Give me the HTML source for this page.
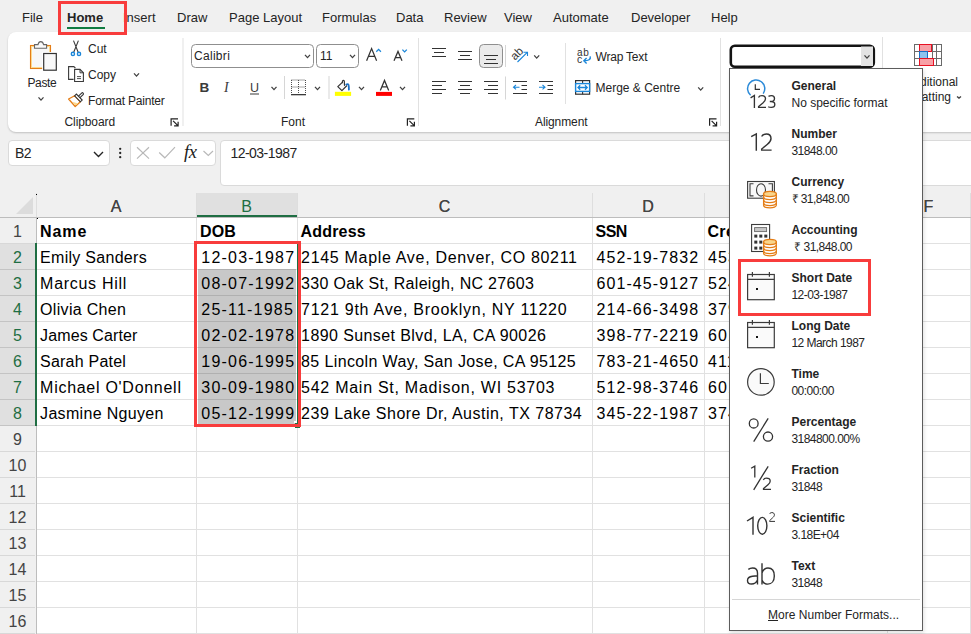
<!DOCTYPE html><html><head><meta charset="utf-8"><style>
*{box-sizing:border-box;margin:0;padding:0}
html,body{width:971px;height:634px;overflow:hidden;background:#f0f0f0;font-family:"Liberation Sans",sans-serif;color:#242424;position:relative}
.a{position:absolute;white-space:nowrap}
.tab{position:absolute;top:10px;font-size:13px;line-height:15px;color:#242424;white-space:nowrap}
.rib{position:absolute;left:8px;top:32px;width:980px;height:100px;background:#fff;border-radius:8px;box-shadow:0 1px 2px rgba(0,0,0,.2)}
.t12{position:absolute;font-size:12px;line-height:14px;color:#242424;white-space:nowrap}
.sep{position:absolute;width:1px;background:#e0e0e0}
.cell{position:absolute;font-size:16px;line-height:26px;height:26px;color:#000;white-space:nowrap}
.rh{position:absolute;left:0;width:35px;height:26px;font-size:16px;line-height:26px;text-align:center;color:#444}
.ch{position:absolute;top:194.5px;height:24px;font-size:16px;line-height:24px;text-align:center;color:#444}
.dd .t{position:absolute;left:62px;font-size:12px;font-weight:bold;line-height:14px;color:#242424;white-space:nowrap}
.dd .s{position:absolute;left:62px;font-size:12px;line-height:14px;color:#242424;white-space:nowrap}
svg{position:absolute;overflow:visible}
</style></head><body>
<div class="a" style="left:37px;top:218px;width:934px;height:416px;background:#fff"></div>
<div class="a" style="left:198px;top:270px;width:98px;height:155px;background:#c8c8c8"></div>
<div class="a" style="left:37px;top:243px;width:934px;height:1px;background:#e1e1e1"></div>
<div class="a" style="left:37px;top:269px;width:934px;height:1px;background:#e1e1e1"></div>
<div class="a" style="left:37px;top:295px;width:934px;height:1px;background:#e1e1e1"></div>
<div class="a" style="left:37px;top:321px;width:934px;height:1px;background:#e1e1e1"></div>
<div class="a" style="left:37px;top:347px;width:934px;height:1px;background:#e1e1e1"></div>
<div class="a" style="left:37px;top:373px;width:934px;height:1px;background:#e1e1e1"></div>
<div class="a" style="left:37px;top:399px;width:934px;height:1px;background:#e1e1e1"></div>
<div class="a" style="left:37px;top:425px;width:934px;height:1px;background:#e1e1e1"></div>
<div class="a" style="left:37px;top:451px;width:934px;height:1px;background:#e1e1e1"></div>
<div class="a" style="left:37px;top:477px;width:934px;height:1px;background:#e1e1e1"></div>
<div class="a" style="left:37px;top:503px;width:934px;height:1px;background:#e1e1e1"></div>
<div class="a" style="left:37px;top:529px;width:934px;height:1px;background:#e1e1e1"></div>
<div class="a" style="left:37px;top:555px;width:934px;height:1px;background:#e1e1e1"></div>
<div class="a" style="left:37px;top:581px;width:934px;height:1px;background:#e1e1e1"></div>
<div class="a" style="left:37px;top:607px;width:934px;height:1px;background:#e1e1e1"></div>
<div class="a" style="left:37px;top:633px;width:934px;height:1px;background:#e1e1e1"></div>
<div class="a" style="left:198px;top:269px;width:98px;height:1px;background:#b0b0b0"></div>
<div class="a" style="left:198px;top:295px;width:98px;height:1px;background:#b0b0b0"></div>
<div class="a" style="left:198px;top:321px;width:98px;height:1px;background:#b0b0b0"></div>
<div class="a" style="left:198px;top:347px;width:98px;height:1px;background:#b0b0b0"></div>
<div class="a" style="left:198px;top:373px;width:98px;height:1px;background:#b0b0b0"></div>
<div class="a" style="left:198px;top:399px;width:98px;height:1px;background:#b0b0b0"></div>
<div class="a" style="left:196px;top:218px;width:1px;height:416px;background:#e1e1e1"></div>
<div class="a" style="left:297px;top:218px;width:1px;height:416px;background:#e1e1e1"></div>
<div class="a" style="left:592px;top:218px;width:1px;height:416px;background:#e1e1e1"></div>
<div class="a" style="left:704px;top:218px;width:1px;height:416px;background:#e1e1e1"></div>
<div class="a" style="left:887px;top:218px;width:1px;height:416px;background:#e1e1e1"></div>
<div class="a" style="left:970px;top:218px;width:1px;height:416px;background:#e1e1e1"></div>
<div class="a" style="left:0;top:217px;width:971px;height:1px;background:#bdbdbd"></div>
<div class="a" style="left:196px;top:193px;width:1px;height:24px;background:#dedede"></div>
<div class="a" style="left:297px;top:193px;width:1px;height:24px;background:#dedede"></div>
<div class="a" style="left:592px;top:193px;width:1px;height:24px;background:#dedede"></div>
<div class="a" style="left:704px;top:193px;width:1px;height:24px;background:#dedede"></div>
<div class="a" style="left:887px;top:193px;width:1px;height:24px;background:#dedede"></div>
<div class="a" style="left:970px;top:193px;width:1px;height:24px;background:#dedede"></div>
<div class="a" style="left:36px;top:193px;width:1px;height:441px;background:#bdbdbd"></div>
<div class="a" style="left:196px;top:193px;width:101px;height:24px;background:#e0e0e0"></div>
<div class="a" style="left:196px;top:215px;width:101px;height:2px;background:#1f6e43"></div>
<div class="a" style="left:0;top:244px;width:35px;height:182px;background:#e0e0e0"></div>
<div class="a" style="left:35px;top:243px;width:2px;height:183px;background:#1f6e43"></div>
<div class="a" style="left:0;top:243px;width:35px;height:1px;background:#d8d8d8"></div>
<div class="a" style="left:0;top:269px;width:35px;height:1px;background:#c4c4c4"></div>
<div class="a" style="left:0;top:295px;width:35px;height:1px;background:#c4c4c4"></div>
<div class="a" style="left:0;top:321px;width:35px;height:1px;background:#c4c4c4"></div>
<div class="a" style="left:0;top:347px;width:35px;height:1px;background:#c4c4c4"></div>
<div class="a" style="left:0;top:373px;width:35px;height:1px;background:#c4c4c4"></div>
<div class="a" style="left:0;top:399px;width:35px;height:1px;background:#c4c4c4"></div>
<div class="a" style="left:0;top:425px;width:35px;height:1px;background:#c4c4c4"></div>
<div class="a" style="left:0;top:451px;width:35px;height:1px;background:#d8d8d8"></div>
<div class="a" style="left:0;top:477px;width:35px;height:1px;background:#d8d8d8"></div>
<div class="a" style="left:0;top:503px;width:35px;height:1px;background:#d8d8d8"></div>
<div class="a" style="left:0;top:529px;width:35px;height:1px;background:#d8d8d8"></div>
<div class="a" style="left:0;top:555px;width:35px;height:1px;background:#d8d8d8"></div>
<div class="a" style="left:0;top:581px;width:35px;height:1px;background:#d8d8d8"></div>
<div class="a" style="left:0;top:607px;width:35px;height:1px;background:#d8d8d8"></div>
<div class="a" style="left:0;top:633px;width:35px;height:1px;background:#d8d8d8"></div>
<svg style="left:0;top:0" width="971" height="634"><polygon points="33,197 33,214 16,214" fill="#dcdcdc"/></svg>
<div class="ch" style="left:36px;width:160px;color:#444">A</div>
<div class="ch" style="left:196px;width:101px;color:#1f6e43">B</div>
<div class="ch" style="left:297px;width:295px;color:#444">C</div>
<div class="ch" style="left:592px;width:112px;color:#444">D</div>
<div class="ch" style="left:704px;width:183px;color:#444">E</div>
<div class="ch" style="left:887px;width:83px;color:#444">F</div>
<div class="rh" style="top:219px;color:#444">1</div>
<div class="rh" style="top:245px;color:#1f6e43">2</div>
<div class="rh" style="top:271px;color:#1f6e43">3</div>
<div class="rh" style="top:297px;color:#1f6e43">4</div>
<div class="rh" style="top:323px;color:#1f6e43">5</div>
<div class="rh" style="top:349px;color:#1f6e43">6</div>
<div class="rh" style="top:375px;color:#1f6e43">7</div>
<div class="rh" style="top:401px;color:#1f6e43">8</div>
<div class="rh" style="top:427px;color:#444">9</div>
<div class="rh" style="top:453px;color:#444">10</div>
<div class="rh" style="top:479px;color:#444">11</div>
<div class="rh" style="top:505px;color:#444">12</div>
<div class="rh" style="top:531px;color:#444">13</div>
<div class="rh" style="top:557px;color:#444">14</div>
<div class="rh" style="top:583px;color:#444">15</div>
<div class="rh" style="top:609px;color:#444">16</div>
<div class="cell" style="left:40px;top:219px;font-weight:bold;letter-spacing:0.9px">Name</div>
<div class="cell" style="left:200px;top:219px;font-weight:bold;letter-spacing:0.1px">DOB</div>
<div class="cell" style="left:300.6px;top:219px;font-weight:bold;letter-spacing:0.17px">Address</div>
<div class="cell" style="left:595.5px;top:219px;font-weight:bold;letter-spacing:-0.5px">SSN</div>
<div class="cell" style="left:707.5px;top:219px;font-weight:bold;letter-spacing:0.3px">Credit Card</div>
<div class="cell" style="left:40.1px;top:245px;letter-spacing:0.283px">Emily Sanders</div>
<div class="cell" style="left:201.3px;top:245px;letter-spacing:1.21px">12-03-1987</div>
<div class="cell" style="left:301.1px;top:245px;letter-spacing:0.684px">2145 Maple Ave, Denver, CO 80211</div>
<div class="cell" style="left:596.5px;top:245px;letter-spacing:1.08px">452-19-7832</div>
<div class="cell" style="left:708px;top:245px;letter-spacing:1.08px">4532 7012</div>
<div class="cell" style="left:40.1px;top:271px;letter-spacing:0.71px">Marcus Hill</div>
<div class="cell" style="left:201.3px;top:271px;letter-spacing:1.21px">08-07-1992</div>
<div class="cell" style="left:301.1px;top:271px;letter-spacing:0.307px">330 Oak St, Raleigh, NC 27603</div>
<div class="cell" style="left:596.5px;top:271px;letter-spacing:1.08px">601-45-9127</div>
<div class="cell" style="left:708px;top:271px;letter-spacing:1.08px">5241 8830</div>
<div class="cell" style="left:40.1px;top:297px;letter-spacing:0.31px">Olivia Chen</div>
<div class="cell" style="left:201.3px;top:297px;letter-spacing:1.21px">25-11-1985</div>
<div class="cell" style="left:301.1px;top:297px;letter-spacing:0.732px">7121 9th Ave, Brooklyn, NY 11220</div>
<div class="cell" style="left:596.5px;top:297px;letter-spacing:1.08px">214-66-3498</div>
<div class="cell" style="left:708px;top:297px;letter-spacing:1.08px">3791 2254</div>
<div class="cell" style="left:40.1px;top:323px;letter-spacing:0.109px">James Carter</div>
<div class="cell" style="left:201.3px;top:323px;letter-spacing:1.21px">02-02-1978</div>
<div class="cell" style="left:301.1px;top:323px;letter-spacing:0.403px">1890 Sunset Blvd, LA, CA 90026</div>
<div class="cell" style="left:596.5px;top:323px;letter-spacing:1.08px">398-77-2219</div>
<div class="cell" style="left:708px;top:323px;letter-spacing:1.08px">6011 5542</div>
<div class="cell" style="left:40.1px;top:349px;letter-spacing:0.21px">Sarah Patel</div>
<div class="cell" style="left:201.3px;top:349px;letter-spacing:1.21px">19-06-1995</div>
<div class="cell" style="left:301.1px;top:349px;letter-spacing:0.37px">85 Lincoln Way, San Jose, CA 95125</div>
<div class="cell" style="left:596.5px;top:349px;letter-spacing:1.08px">783-21-4650</div>
<div class="cell" style="left:708px;top:349px;letter-spacing:1.08px">4111 0027</div>
<div class="cell" style="left:40.1px;top:375px;letter-spacing:0.719px">Michael O&#39;Donnell</div>
<div class="cell" style="left:201.3px;top:375px;letter-spacing:1.21px">30-09-1980</div>
<div class="cell" style="left:301.1px;top:375px;letter-spacing:0.731px">542 Main St, Madison, WI 53703</div>
<div class="cell" style="left:596.5px;top:375px;letter-spacing:1.08px">512-98-3746</div>
<div class="cell" style="left:708px;top:375px;letter-spacing:1.08px">6011 9831</div>
<div class="cell" style="left:40.1px;top:401px;letter-spacing:0.315px">Jasmine Nguyen</div>
<div class="cell" style="left:201.3px;top:401px;letter-spacing:1.21px">05-12-1999</div>
<div class="cell" style="left:301.1px;top:401px;letter-spacing:0.494px">239 Lake Shore Dr, Austin, TX 78734</div>
<div class="cell" style="left:596.5px;top:401px;letter-spacing:1.08px">345-22-1987</div>
<div class="cell" style="left:708px;top:401px;letter-spacing:1.08px">3742 5518</div>
<div class="a" style="left:297px;top:244px;width:1px;height:181px;background:#1f6e43"></div>
<div class="a" style="left:194px;top:241px;width:107px;height:186px;border:3px solid #f83c3c"></div>
<div class="a" style="left:295px;top:422.5px;width:3px;height:1px;background:#1f6e43"></div>
<div class="a" style="left:295px;top:427px;width:5px;height:1px;background:#1f6e43"></div>
<div class="a" style="left:294px;top:421px;width:3px;height:1.5px;background:#fff"></div>
<div class="a" style="left:0;top:0;width:971px;height:193px;background:#f0f0f0"></div>
<div class="a" style="left:0;top:193px;width:36px;height:24px;background:#f0f0f0"></div>
<svg style="left:0;top:0" width="971" height="634"><polygon points="33,197 33,214 16,214" fill="#dcdcdc"/></svg>
<div class="a" style="left:36px;top:193px;width:1px;height:24px;background:#dedede"></div>
<div class="a" style="left:196px;top:193px;width:101px;height:24px;background:#e0e0e0"></div>
<div class="a" style="left:196px;top:215px;width:101px;height:2px;background:#1f6e43"></div>
<div class="a" style="left:196px;top:193px;width:1px;height:24px;background:#dedede"></div>
<div class="a" style="left:297px;top:193px;width:1px;height:24px;background:#dedede"></div>
<div class="a" style="left:592px;top:193px;width:1px;height:24px;background:#dedede"></div>
<div class="a" style="left:704px;top:193px;width:1px;height:24px;background:#dedede"></div>
<div class="a" style="left:887px;top:193px;width:1px;height:24px;background:#dedede"></div>
<div class="a" style="left:970px;top:193px;width:1px;height:24px;background:#dedede"></div>
<div class="ch" style="left:36px;width:160px;color:#444">A</div>
<div class="ch" style="left:196px;width:101px;color:#1f6e43">B</div>
<div class="ch" style="left:297px;width:295px;color:#444">C</div>
<div class="ch" style="left:592px;width:112px;color:#444">D</div>
<div class="ch" style="left:704px;width:183px;color:#444">E</div>
<div class="ch" style="left:887px;width:83px;color:#444">F</div>
<div class="a" style="left:36px;top:194px;width:1px;height:1px;background:#000"></div>
<div class="a" style="left:37px;top:218px;width:1px;height:1px;background:#000"></div>
<div class="tab" style="left:22px">File</div>
<div class="tab" style="left:67px;font-weight:bold">Home</div>
<div class="tab" style="left:123px">Insert</div>
<div class="tab" style="left:177px">Draw</div>
<div class="tab" style="left:229px">Page Layout</div>
<div class="tab" style="left:322px">Formulas</div>
<div class="tab" style="left:396px">Data</div>
<div class="tab" style="left:444px">Review</div>
<div class="tab" style="left:504px">View</div>
<div class="tab" style="left:553px">Automate</div>
<div class="tab" style="left:631px">Developer</div>
<div class="tab" style="left:711px">Help</div>
<div class="a" style="left:67px;top:27px;width:38px;height:2px;background:#107c41"></div>
<div class="rib"></div>
<div class="a" style="left:58px;top:1px;width:69px;height:34px;border:3px solid #f83c3c;z-index:5"></div>
<div class="a" style="left:8px;top:140px;width:102px;height:26px;background:#fff;border:1px solid #dadada;border-radius:4px"></div>
<div class="a" style="left:15px;top:145px;font-size:14px;line-height:16px;color:#242424;letter-spacing:-.6px">B2</div>
<svg style="left:0;top:0" width="971" height="634" fill="none" stroke="#242424" stroke-width="1.4"><path d="M94,152 L98.5,156.5 L103,152"/></svg>
<svg style="left:0;top:0" width="971" height="634" fill="#242424"><circle cx="120.2" cy="148.8" r="1.15"/><circle cx="120.2" cy="153" r="1.15"/><circle cx="120.2" cy="157.2" r="1.15"/></svg>
<div class="a" style="left:130px;top:140px;width:86px;height:26px;background:#fff;border:1px solid #dadada;border-radius:4px"></div>
<svg style="left:0;top:0" width="971" height="634" fill="none" stroke="#b8b8b8" stroke-width="1.2"><path d="M137,147.2 L149,158.6 M149,147.2 L137,158.6"/><path d="M159.2,152.5 L164.8,157.8 L175,147.2"/><path d="M203.5,151 L208.3,155.5 L213,151"/></svg>
<div class="a" style="left:184px;top:142px;font-family:'Liberation Serif',serif;font-style:italic;font-size:18.5px;line-height:20px;color:#1a1a1a;letter-spacing:-.3px">fx</div>
<div class="a" style="left:220px;top:140px;width:760px;height:46px;background:#fff;border:1px solid #dadada;border-radius:4px"></div>
<div class="a" style="left:230.5px;top:145px;font-size:14px;line-height:16px;color:#242424;letter-spacing:-.55px">12-03-1987</div>
<svg style="left:0;top:0" width="971" height="634"><rect x="182.5" y="38" width="1" height="88" fill="#e1e1e1"/><rect x="418" y="38" width="1" height="88" fill="#e1e1e1"/><rect x="720" y="38" width="1" height="88" fill="#e1e1e1"/><rect x="882" y="37" width="1" height="88" fill="#e1e1e1"/><rect x="30.5" y="45.5" width="20" height="23" fill="#fff" stroke="#e47d16" stroke-width="1.1"/><rect x="31.6" y="46.6" width="17.8" height="20.8" fill="none" stroke="#fbd889" stroke-width="1.1"/><rect x="32.2" y="47.2" width="16.6" height="19.6" fill="#f7f7f7"/><path d="M34.5,48.2 L34.5,44.6 L38,44.6 C38.5,42.2 39.6,41.6 40.8,41.6 C42,41.6 43.1,42.2 43.6,44.6 L46.6,44.6 L46.6,48.2 Z" fill="#fafafa" stroke="#666" stroke-width="1.1"/><rect x="42.2" y="52" width="15.6" height="19.7" fill="#fff"/><rect x="43.7" y="53.5" width="12.6" height="16.7" fill="#f8f8f8" stroke="#333" stroke-width="1.2"/><path d="M38.5,97.4 L41.0,100.10000000000001 L43.5,97.4" fill="none" stroke="#424242" stroke-width="1.3"/><path d="M73.5,40.6 L78.2,52.3 M78.4,40.6 L73.7,52.3" stroke="#3a3a3a" stroke-width="1.1" fill="none"/><circle cx="72.9" cy="53.9" r="1.6" fill="#fff" stroke="#1a86d9" stroke-width="1.4"/><circle cx="79" cy="53.9" r="1.6" fill="#fff" stroke="#1a86d9" stroke-width="1.4"/><path d="M73.6,79.4 L68.6,79.4 L68.6,66.6 L73.8,66.6 L75.4,68" fill="none" stroke="#3a3a3a" stroke-width="1.1"/><path d="M74.6,69.4 L80,69.4 L83.4,72.8 L83.4,81.5 L74.6,81.5 Z" fill="#fff" stroke="#3a3a3a" stroke-width="1.1"/><path d="M80,69.4 L80,72.8 L83.4,72.8" fill="none" stroke="#3a3a3a" stroke-width="1"/><path d="M77,76.6 L81,76.6 M77,78.6 L81,78.6" stroke="#3a3a3a" stroke-width="0.9"/><path d="M134.0,73.4 L136.5,76.10000000000001 L139.0,73.4" fill="none" stroke="#424242" stroke-width="1.3"/><path d="M68.6,99 L74.6,95.8 L80.4,101.8 L75.2,106.5 Z" fill="#fff" stroke="#e47d16" stroke-width="1.3" stroke-linejoin="round"/><path d="M72.5,101.8 L78.2,103.6 L75.3,105.6 Z" fill="#fcd98a"/><path d="M82.4,93.8 L79,97.2" stroke="#333" stroke-width="3.2" stroke-linecap="round"/><path d="M82.4,93.8 L79,97.2" stroke="#fff" stroke-width="1.1" stroke-linecap="round"/><path d="M74.6,95.8 L76.4,94 L82.2,100 L80.4,101.8 Z" fill="#fff" stroke="#333" stroke-width="1.1"/><path d="M171.1,125.7 L171.1,118.8 L178.0,118.8" fill="none" stroke="#222" stroke-width="1.2"/><path d="M173.1,120.8 L177.9,125.60000000000001 M178.1,121.8 L178.1,125.8 L174.1,125.8" fill="none" stroke="#222" stroke-width="1.2"/><rect x="191.5" y="44.5" width="122" height="23" rx="4" fill="#fff" stroke="#8f8f8f" stroke-width="1"/><rect x="316.5" y="44.5" width="42" height="23" rx="4" fill="#fff" stroke="#8f8f8f" stroke-width="1"/><path d="M305.0,54.9 L307.5,57.6 L310.0,54.9" fill="none" stroke="#424242" stroke-width="1.3"/><path d="M350.0,54.9 L352.5,57.6 L355.0,54.9" fill="none" stroke="#424242" stroke-width="1.3"/><path d="M366.6,60.8 L371.6,48.6 L376.6,60.8 M368.4,56.4 L374.8,56.4" fill="none" stroke="#333" stroke-width="1.25"/><path d="M376.3,51.8 L378.6,49.4 L380.9,51.8" fill="none" stroke="#1a86d9" stroke-width="1.3"/><path d="M394,60.8 L398,51.4 L402,60.8 M395.4,57.6 L400.6,57.6" fill="none" stroke="#333" stroke-width="1.25"/><path d="M402.4,49.6 L404.6,51.9 L406.8,49.6" fill="none" stroke="#1a86d9" stroke-width="1.3"/><text x="199.5" y="92.3" font-family="Liberation Sans" font-weight="bold" font-size="13.5" fill="#3a3a3a">B</text><text x="224" y="92.3" font-family="Liberation Serif" font-style="italic" font-size="14" fill="#3a3a3a">I</text><text x="250" y="92" font-family="Liberation Sans" font-size="12.5" fill="#3a3a3a">U</text><rect x="250" y="93.5" width="9" height="1" fill="#3a3a3a"/><path d="M271.5,86.9 L274.0,89.60000000000001 L276.5,86.9" fill="none" stroke="#424242" stroke-width="1.3"/><rect x="284" y="76" width="1" height="23" fill="#d6d6d6"/><path d="M291.5,80 L305.5,80 L305.5,94 M291.5,80 L291.5,94 M298.5,80 L298.5,94 M291.5,87 L305.5,87" fill="none" stroke="#3a3a3a" stroke-width="0.9" stroke-dasharray="1,1"/><rect x="291" y="94" width="15" height="1.3" fill="#3a3a3a"/><path d="M315.0,86.9 L317.5,89.60000000000001 L320.0,86.9" fill="none" stroke="#424242" stroke-width="1.3"/><rect x="328.5" y="76" width="1" height="23" fill="#d6d6d6"/><path d="M342.3,82.4 L337.8,86.6 L341.9,90.6 L347,85.5" fill="#fafafa" stroke="#333" stroke-width="1.2" stroke-linejoin="round"/><path d="M342.4,82.6 L342.5,81 Q343.4,79.6 344.3,81 L344.5,85.3" fill="none" stroke="#333" stroke-width="1.2" stroke-linecap="round"/><path d="M346.3,84.6 Q348.6,83 348.8,86.5 L348.9,89.6" fill="none" stroke="#1a6fc4" stroke-width="1.8" stroke-linecap="round"/><rect x="334.9" y="91.8" width="16.2" height="4.1" fill="#ffff00"/><path d="M359.0,86.9 L361.5,89.60000000000001 L364.0,86.9" fill="none" stroke="#424242" stroke-width="1.3"/><path d="M380.3,90.6 L384.5,80.4 L388.7,90.6 M381.8,86.8 L387.2,86.8" fill="none" stroke="#333" stroke-width="1.25"/><rect x="376" y="91.9" width="16" height="4" fill="#ff0000"/><path d="M400.0,86.9 L402.5,89.60000000000001 L405.0,86.9" fill="none" stroke="#424242" stroke-width="1.3"/><path d="M407.40000000000003,125.7 L407.40000000000003,118.8 L414.3,118.8" fill="none" stroke="#222" stroke-width="1.2"/><path d="M409.40000000000003,120.8 L414.2,125.60000000000001 M414.40000000000003,121.8 L414.40000000000003,125.8 L410.40000000000003,125.8" fill="none" stroke="#222" stroke-width="1.2"/><rect x="432.0" y="48" width="14" height="1" fill="#333"/><rect x="434.0" y="52" width="10" height="1" fill="#333"/><rect x="432.0" y="56" width="14" height="1" fill="#333"/><rect x="458.0" y="51" width="14" height="1" fill="#333"/><rect x="460.0" y="55" width="10" height="1" fill="#333"/><rect x="458.0" y="59" width="14" height="1" fill="#333"/><rect x="479.5" y="44.5" width="23" height="23" rx="4" fill="#ebebeb" stroke="#8f8f8f" stroke-width="1"/><rect x="484.0" y="55" width="14" height="1" fill="#333"/><rect x="486.0" y="59" width="10" height="1" fill="#333"/><rect x="484.0" y="63" width="14" height="1" fill="#333"/><rect x="505" y="45" width="1" height="22" fill="#d6d6d6"/><text x="0" y="0" font-family="Liberation Sans" font-size="11.5" fill="#333" transform="translate(515,60.8) rotate(-45)">ab</text><path d="M517.5,62 L527.5,52.2 M523.5,52.2 L527.5,52.2 L527.5,56" fill="none" stroke="#1a86d9" stroke-width="1.1"/><path d="M534.2,55.4 L536.7,58.1 L539.2,55.4" fill="none" stroke="#424242" stroke-width="1.3"/><rect x="432" y="81" width="14" height="1" fill="#333"/><rect x="432" y="85" width="10" height="1" fill="#333"/><rect x="432" y="89" width="14" height="1" fill="#333"/><rect x="432" y="93" width="10" height="1" fill="#333"/><rect x="458.0" y="81" width="14" height="1" fill="#333"/><rect x="460.0" y="85" width="10" height="1" fill="#333"/><rect x="458.0" y="89" width="14" height="1" fill="#333"/><rect x="460.0" y="93" width="10" height="1" fill="#333"/><rect x="484" y="81" width="14" height="1" fill="#333"/><rect x="488" y="85" width="10" height="1" fill="#333"/><rect x="484" y="89" width="14" height="1" fill="#333"/><rect x="488" y="93" width="10" height="1" fill="#333"/><rect x="505" y="76.5" width="1" height="23" fill="#d6d6d6"/><rect x="513" y="81" width="14" height="1" fill="#333"/><rect x="521.5" y="85" width="5.5" height="1" fill="#333"/><rect x="521.5" y="89" width="5.5" height="1" fill="#333"/><rect x="513" y="93" width="14" height="1" fill="#333"/><path d="M513.5,87.2 L519.5,87.2 M516,85 L513.5,87.2 L516,89.4" fill="none" stroke="#1a86d9" stroke-width="1.1"/><rect x="539" y="81" width="14" height="1" fill="#333"/><rect x="547.5" y="85" width="5.5" height="1" fill="#333"/><rect x="547.5" y="89" width="5.5" height="1" fill="#333"/><rect x="539" y="93" width="14" height="1" fill="#333"/><path d="M539,87.2 L545,87.2 M542.5,85 L545,87.2 L542.5,89.4" fill="none" stroke="#1a86d9" stroke-width="1.1"/><rect x="565" y="43" width="1" height="61" fill="#e1e1e1"/><text x="577" y="55.6" font-family="Liberation Sans" font-size="10" fill="#333" letter-spacing="0.6">ab</text><text x="577" y="62.6" font-family="Liberation Sans" font-size="10.5" fill="#333">c</text><path d="M590.2,56.4 C591,59.5 588.5,60.8 584,60.8 M586.6,58 L583.8,60.8 L586.6,63.4" fill="none" stroke="#1a86d9" stroke-width="1.4" stroke-linejoin="round"/><rect x="575.6" y="80.6" width="14" height="13.6" fill="#fff" stroke="#333" stroke-width="1.2"/><path d="M582.6,80.6 L582.6,83.5 M582.6,91.5 L582.6,94.2" stroke="#333" stroke-width="1.1"/><rect x="575.6" y="83.6" width="14" height="7.8" fill="#fff" stroke="#1a86d9" stroke-width="1.4"/><path d="M578,87.5 L587.2,87.5 M580.2,85.3 L578,87.5 L580.2,89.7 M585,85.3 L587.2,87.5 L585,89.7" fill="none" stroke="#1a86d9" stroke-width="1.3"/><path d="M698.2,87.4 L700.7,90.10000000000001 L703.2,87.4" fill="none" stroke="#424242" stroke-width="1.3"/><path d="M709.6,125.7 L709.6,118.8 L716.5,118.8" fill="none" stroke="#222" stroke-width="1.2"/><path d="M711.6,120.8 L716.4,125.60000000000001 M716.6,121.8 L716.6,125.8 L712.6,125.8" fill="none" stroke="#222" stroke-width="1.2"/><rect x="730.8" y="45.8" width="143" height="21" rx="4" fill="#fff" stroke="#141414" stroke-width="2.6"/><rect x="861" y="46.5" width="12" height="19.5" fill="#e3e3e3"/><path d="M864.5,55.4 L867.0,58.1 L869.5,55.4" fill="none" stroke="#424242" stroke-width="1.3"/><rect x="914.5" y="44.5" width="27" height="21" fill="#fff" stroke="#6a6a6a" stroke-width="1"/><path d="M914.5,51.5 L941.5,51.5 M914.5,58.5 L941.5,58.5 M919.5,44.5 L919.5,65.5 M932.5,44.5 L932.5,65.5 M936.5,44.5 L936.5,65.5" stroke="#6a6a6a" stroke-width="1"/><rect x="919.5" y="44.5" width="12" height="7" fill="#f7a1a7" stroke="#e81123" stroke-width="1"/><rect x="919.5" y="51.5" width="8" height="7" fill="#8ec3ee" stroke="#1a6fc4" stroke-width="1"/><rect x="919.5" y="58.5" width="14" height="7" fill="#f7a1a7" stroke="#e81123" stroke-width="1"/><path d="M957.0,96.4 L959.0,98.10000000000001 L961.0,96.4" fill="none" stroke="#424242" stroke-width="1.3"/></svg>
<div class="t12" style="left:27.5px;top:75.8px;letter-spacing:-.4px">Paste</div>
<div class="t12" style="left:88px;top:41.8px;">Cut</div>
<div class="t12" style="left:88px;top:67.8px;">Copy</div>
<div class="t12" style="left:88px;top:93.8px;letter-spacing:-.2px">Format Painter</div>
<div class="t12" style="left:64.5px;top:114.8px;letter-spacing:-.1px">Clipboard</div>
<div class="t12" style="left:194px;top:49.1px;letter-spacing:.3px">Calibri</div>
<div class="t12" style="left:320px;top:49.1px;">11</div>
<div class="t12" style="left:281px;top:114.8px;">Font</div>
<div class="t12" style="left:595.5px;top:49.8px;letter-spacing:-.2px">Wrap Text</div>
<div class="t12" style="left:595.5px;top:81.4px;">Merge &amp; Centre</div>
<div class="t12" style="left:535px;top:114.8px;letter-spacing:-.1px">Alignment</div>
<div class="t12" style="right:13px;top:74.6px">Conditional</div>
<div class="t12" style="right:20px;top:90.2px">Formatting</div>
<div class="a" style="left:729px;top:68px;width:194px;height:563px;background:#fff;border:1px solid #5c5c5c;box-shadow:1px 2px 4px rgba(0,0,0,.12)"></div>
<div class="t12" style="left:791.5px;top:78.8px;font-weight:bold">General</div>
<div class="t12" style="left:791.5px;top:95.8px;letter-spacing:0">No specific format</div>
<div class="t12" style="left:791.5px;top:126.8px;font-weight:bold">Number</div>
<div class="t12" style="left:791.5px;top:143.8px;letter-spacing:-.55px">31848.00</div>
<div class="t12" style="left:791.5px;top:174.8px;font-weight:bold">Currency</div>
<div class="t12" style="left:791.5px;top:191.8px;letter-spacing:-.55px">&#8377; 31,848.00</div>
<div class="t12" style="left:791.5px;top:222.8px;font-weight:bold">Accounting</div>
<div class="t12" style="left:791.5px;top:239.8px;letter-spacing:-.55px">&nbsp;&#8377; 31,848.00</div>
<div class="t12" style="left:791.5px;top:270.8px;font-weight:bold">Short Date</div>
<div class="t12" style="left:791.5px;top:287.8px;letter-spacing:-.55px">12-03-1987</div>
<div class="t12" style="left:791.5px;top:318.8px;font-weight:bold">Long Date</div>
<div class="t12" style="left:791.5px;top:335.8px;letter-spacing:-.55px">12 March 1987</div>
<div class="t12" style="left:791.5px;top:366.8px;font-weight:bold">Time</div>
<div class="t12" style="left:791.5px;top:383.8px;letter-spacing:-.55px">00:00:00</div>
<div class="t12" style="left:791.5px;top:414.8px;font-weight:bold">Percentage</div>
<div class="t12" style="left:791.5px;top:431.8px;letter-spacing:-.55px">3184800.00%</div>
<div class="t12" style="left:791.5px;top:462.8px;font-weight:bold">Fraction</div>
<div class="t12" style="left:791.5px;top:479.8px;letter-spacing:-.55px">31848</div>
<div class="t12" style="left:791.5px;top:510.8px;font-weight:bold">Scientific</div>
<div class="t12" style="left:791.5px;top:527.8px;letter-spacing:-.55px">3.18E+04</div>
<div class="t12" style="left:791.5px;top:558.8px;font-weight:bold">Text</div>
<div class="t12" style="left:791.5px;top:575.8px;letter-spacing:-.55px">31848</div>
<svg style="left:0;top:0" width="971" height="634"><path d="M750.6,95.2 A8.6,8.6 0 1 1 763.2,93.6" fill="none" stroke="#2b8ad8" stroke-width="1.5"/><path d="M755.3,84.2 L755.3,89.4 L760,89.4" fill="none" stroke="#333" stroke-width="1.2"/><path d="M750.6,97.9 L754.4,95.5 L754.4,107.9 M758.5,97.4 C759.1,95.9 760.4,95.6 762,95.6 C764.3,95.6 765.5,96.9 765.5,98.8 C765.5,100.4 764.6,101.6 762.9,103 L758.6,106.5 L758.6,107.3 L766,107.3 M768.5,96.3 C769.2,95.9 770.3,95.6 771.5,95.6 C773.5,95.6 774.5,96.9 774.5,98.5 C774.5,100.3 773.2,101.5 771,101.5 L769.8,101.5 M771,101.5 C773.5,101.5 774.8,102.7 774.8,104.5 C774.8,106.4 773.4,107.4 771.3,107.4 C770.1,107.4 769,107.2 768.2,106.7" fill="none" stroke="#333" stroke-width="1.35"/><path d="M751.2,136.7 L756.3,133.9 L756.3,150.8 M761.7,136.5 C762.6,134.6 764.2,133.9 766.3,133.9 C769.3,133.9 771,135.8 771,138.5 C771,140.9 769.7,142.5 767.2,144.5 L761.7,149 L761.7,150.1 L771.6,150.1" fill="none" stroke="#333" stroke-width="1.45"/><rect x="747.6" y="181.5" width="26.8" height="16.7" fill="#f8f8f8" stroke="#3c3c3c" stroke-width="1.1"/><path d="M753.5,183.8 L750,183.8 L750,195.9 L753.5,195.9 M768.5,183.8 L772.4,183.8 L772.4,191" fill="none" stroke="#3c3c3c" stroke-width="1.1"/><ellipse cx="761" cy="189.9" rx="4.5" ry="6.2" fill="none" stroke="#3c3c3c" stroke-width="1.1"/><path d="M763.6,194 L763.6,205.2 A6.35,2.6 0 0 0 776.3000000000001,205.2 L776.3000000000001,194 Z" fill="#fff" stroke="#e47d16" stroke-width="1.3"/><path d="M763.6,197 A6.35,2.6 0 0 0 776.3000000000001,197" fill="none" stroke="#e47d16" stroke-width="1.3"/><path d="M763.6,200 A6.35,2.6 0 0 0 776.3000000000001,200" fill="none" stroke="#e47d16" stroke-width="1.3"/><path d="M763.6,203 A6.35,2.6 0 0 0 776.3000000000001,203" fill="none" stroke="#e47d16" stroke-width="1.3"/><ellipse cx="769.95" cy="194" rx="6.35" ry="2.6" fill="#f9d58b" stroke="#e47d16" stroke-width="1.3"/><rect x="751.6" y="224.5" width="18" height="27" fill="#fff" stroke="#3c3c3c" stroke-width="1.1"/><rect x="754.6" y="227.6" width="12" height="4" fill="#c8c8c8" stroke="#6a6a6a" stroke-width="0.9"/><rect x="754.3" y="234.6" width="3" height="3" fill="#333"/><rect x="759.3" y="234.6" width="3" height="3" fill="#333"/><rect x="764.3" y="234.6" width="3" height="3" fill="#333"/><rect x="754.3" y="240.6" width="3" height="3" fill="#333"/><rect x="759.3" y="240.6" width="3" height="3" fill="#333"/><rect x="764.3" y="240.6" width="3" height="3" fill="#333"/><rect x="754.3" y="246.6" width="3" height="3" fill="#333"/><rect x="759.3" y="246.6" width="3" height="3" fill="#333"/><rect x="764.3" y="246.6" width="3" height="3" fill="#333"/><path d="M763.6,242 L763.6,253.2 A6.35,2.6 0 0 0 776.3000000000001,253.2 L776.3000000000001,242 Z" fill="#fff" stroke="#e47d16" stroke-width="1.3"/><path d="M763.6,245 A6.35,2.6 0 0 0 776.3000000000001,245" fill="none" stroke="#e47d16" stroke-width="1.3"/><path d="M763.6,248 A6.35,2.6 0 0 0 776.3000000000001,248" fill="none" stroke="#e47d16" stroke-width="1.3"/><path d="M763.6,251 A6.35,2.6 0 0 0 776.3000000000001,251" fill="none" stroke="#e47d16" stroke-width="1.3"/><ellipse cx="769.95" cy="242" rx="6.35" ry="2.6" fill="#f9d58b" stroke="#e47d16" stroke-width="1.3"/><rect x="747.6" y="274.5" width="26.7" height="25.2" fill="#fafafa" stroke="#3c3c3c" stroke-width="1.2"/><path d="M747.6,279.4 L774.3,279.4 M752.4,272 L752.4,276.7 M769.4,272 L769.4,276.7" stroke="#3c3c3c" stroke-width="1.2"/><rect x="756" y="288" width="2" height="2" fill="#111"/><rect x="747.6" y="322.5" width="26.7" height="25.2" fill="#fafafa" stroke="#3c3c3c" stroke-width="1.2"/><path d="M747.6,327.4 L774.3,327.4 M752.4,320 L752.4,324.7 M769.4,320 L769.4,324.7" stroke="#3c3c3c" stroke-width="1.2"/><rect x="756" y="336" width="2" height="2" fill="#111"/><circle cx="760.9" cy="381.9" r="13.3" fill="#fafafa" stroke="#3c3c3c" stroke-width="1.2"/><path d="M760.4,373.2 L760.4,383.5 L768.8,383.5" fill="none" stroke="#3c3c3c" stroke-width="1.2"/><ellipse cx="753.7" cy="423.4" rx="4.4" ry="4.6" fill="none" stroke="#333" stroke-width="1.3"/><ellipse cx="768" cy="436.6" rx="4.6" ry="4.6" fill="none" stroke="#333" stroke-width="1.3"/><path d="M768.2,418.4 L753.7,441.6" stroke="#333" stroke-width="1.3"/><path d="M751.1,468.2 L754.8,466.1 L754.8,477.6 M768.2,466.3 L753.7,489.8 M763.4,480 C763.9,478.7 764.8,478.1 766.2,478.1 C767.9,478.1 770.2,479 770.2,480.9 C770.2,482.4 769.5,483.5 768,484.8 L763.5,488.6 L763.5,489.3 L771,489.3" fill="none" stroke="#333" stroke-width="1.3"/><path d="M747,521 L753,517.3 L753,534.8" fill="none" stroke="#333" stroke-width="1.4"/><ellipse cx="762.3" cy="525.8" rx="4.6" ry="8.4" fill="none" stroke="#333" stroke-width="1.4"/><path d="M769.6,514 C770,513 770.9,512.6 772,512.6 C773.5,512.6 774.4,513.5 774.4,514.8 C774.4,516 773.7,516.9 772.5,517.9 L769.6,520.7 L769.6,521.4 L775,521.4" fill="none" stroke="#333" stroke-width="1"/><path d="M748.3,569.4 C749.6,568.4 751,568 752.6,568 C755.8,568 757.5,569.8 757.5,573 L757.5,584.5 M757.5,575.8 L752.5,576.3 C749.3,576.7 747.5,577.9 747.5,580.4 C747.5,582.6 749,584 751.6,584 C754.5,584 756.5,582.3 757.5,580 M762,563.2 L762,584.5 M762,573 C763,569.8 765.3,568 768,568 C772.1,568 774.3,571.3 774.3,575.9 C774.3,580.9 771.7,584.1 767.8,584.1 C765.1,584.1 763,582.7 762,580" fill="none" stroke="#333" stroke-width="1.4"/><rect x="732" y="599" width="188" height="1" fill="#d6d6d6"/></svg>
<div class="t12" style="left:768px;top:607.5px;letter-spacing:.02px"><span style="text-decoration:underline">M</span>ore Number Formats...</div>
<div class="a" style="left:738px;top:259px;width:133px;height:57px;border:3px solid #f83c3c"></div>
</body></html>
